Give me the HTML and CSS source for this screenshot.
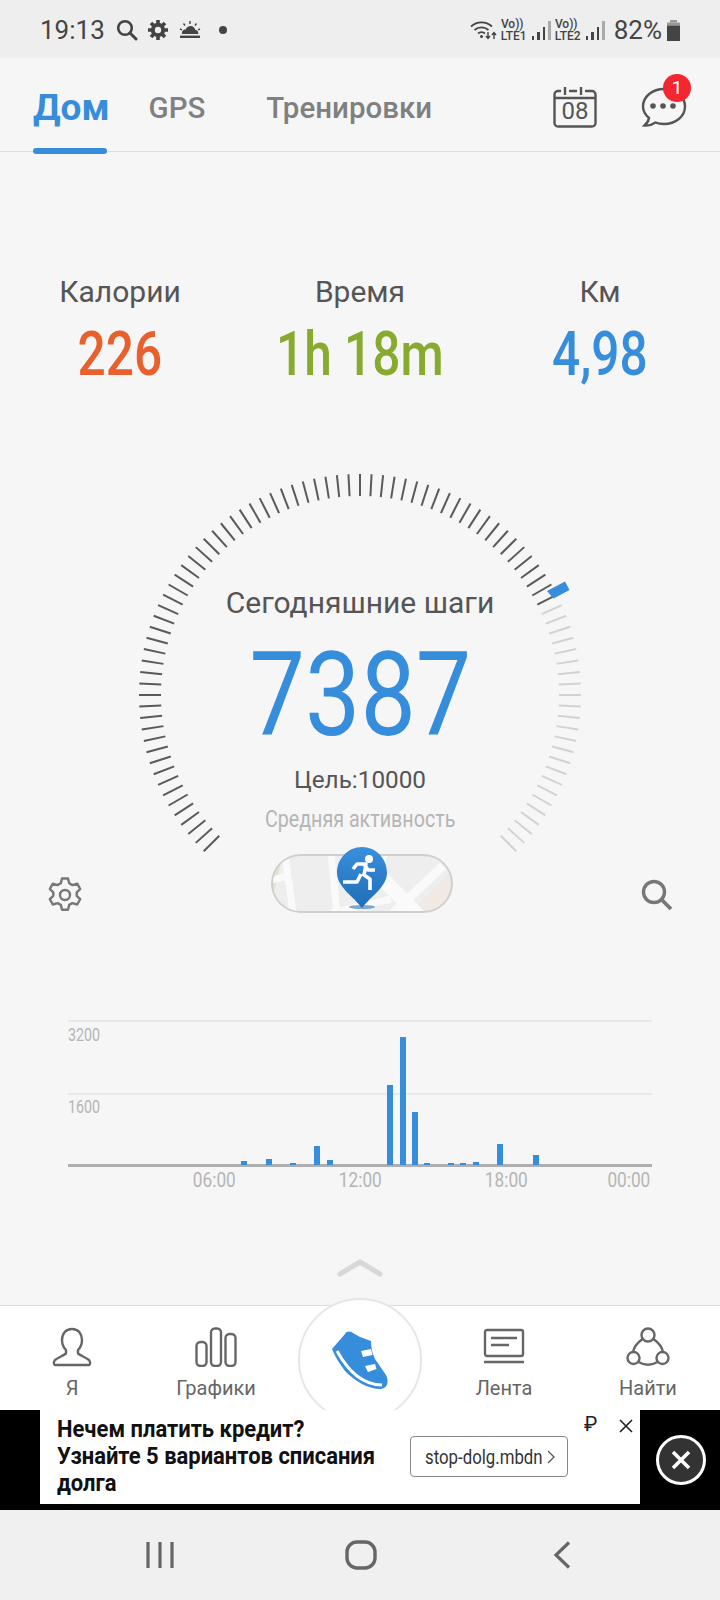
FILE: index.html
```html
<!DOCTYPE html>
<html lang="ru">
<head>
    <meta charset="UTF-8">
    <meta name="viewport" content="width=device-width, initial-scale=1.0">
    <title>Дом</title>
    <link rel="stylesheet" href="styles.css">
</head>
<body>
<div class="phone">

    <!-- system status bar -->
    <div class="statusbar">
        <div class="status-left">
            <span class="clock">19:13</span>
            <svg class="st-search" width="22" height="22" viewBox="0 0 22 22"><circle cx="9" cy="9" r="6.8" fill="none" stroke="#444" stroke-width="2.6"/><path d="M14 14l6 6" stroke="#444" stroke-width="3" stroke-linecap="round"/></svg>
            <svg class="st-gear" width="20" height="20" viewBox="0 0 20 20"><circle cx="10" cy="10" r="5.2" fill="none" stroke="#444" stroke-width="4"/><g stroke="#444" stroke-width="3.6"><path d="M10 0v4M10 16v4M0 10h4M16 10h4M3 3l2.8 2.8M14.2 14.2L17 17M17 3l-2.8 2.8M5.8 14.2L3 17"/></g></svg>
            <svg class="st-weather" width="22" height="18" viewBox="0 0 22 18"><path d="M3 13c-.5-3 1.600-4.600 3.600-4.400C7.600 6.400 9.500 5 11.500 5c2.700 0 4.500 1.800 4.800 3.900 2-.1 3.400 1.700 3 4.100z" fill="#444"/><path d="M1 15.800h20" stroke="#444" stroke-width="2.400"/><path d="M11 0v3M4.500 2.500l1.500 2M17.500 2.500L16 4.500M1 8l2 .8M21 8l-2 .8" stroke="#444" stroke-width="1.400"/></svg>
            <span class="st-dot"></span>
        </div>
        <div class="status-right">
            <svg width="27" height="20" viewBox="0 0 27 20"><g fill="none" stroke="#444" stroke-width="1.800"><path d="M1 6.500C7 1 16 1 22 6.500"/><path d="M4.500 10c4-3.500 10-3.500 14 0"/><path d="M8 13.500c2.200-1.800 4.800-1.800 7 0"/></g><circle cx="11.500" cy="16.500" r="1.500" fill="#444"/><path d="M18 12v6M16 16l2 2.500 2-2.500M24 19v-6M22 15l2-2.500 2 2.500" fill="none" stroke="#444" stroke-width="1.400"/></svg>
            <div class="volte"><span>Vo))</span><span>LTE1</span></div>
            <div class="signal"><i class="s1"></i><i class="s2"></i><i class="s3"></i><i class="s4"></i></div>
            <div class="volte"><span>Vo))</span><span>LTE2</span></div>
            <div class="signal"><i class="s1"></i><i class="s2"></i><i class="s3"></i><i class="s4"></i></div>
            <span class="percent">82%</span>
            <svg width="15" height="21" viewBox="0 0 15 21"><path d="M4 0h7v2.500H4z" fill="#999"/><path d="M1 2.500h13v3H1z" fill="#999"/><path d="M1 5.500h13V21H1z" fill="#444"/></svg>
        </div>
    </div>

    <!-- top tabs -->
    <div class="tabs">
        <a class="tab active">Дом</a>
        <a class="tab tab-gps">GPS</a>
        <a class="tab tab-train">Тренировки</a>
        <div class="tab-icons">
            <div class="calendar">
                <svg width="44" height="42" viewBox="0 0 44 42"><path d="M8 5H5a3.500 3.500 0 0 0-3.500 3.500V37A3.500 3.500 0 0 0 5 40.500h34a3.500 3.500 0 0 0 3.500-3.500V8.500A3.500 3.500 0 0 0 39 5h-7" fill="none" stroke="#555" stroke-width="2.400"/><path d="M1.500 12h41M12 1v8M28 1v8M16 5h8" stroke="#555" stroke-width="2.400"/></svg>
                <span class="cal-day">08</span>
            </div>
            <div class="chat">
                <svg width="46" height="42" viewBox="0 0 46 42"><path d="M23 3c11.500 0 21 7.500 21 17.500S34.500 38 23 38c-3 0-6-.5-8.500-1.500C11.500 38.500 7 40 3.500 39.500c2.500-2 4-4.500 4.500-7.500C4 28.500 2 24.800 2 20.500 2 10.500 11.500 3 23 3z" fill="none" stroke="#555" stroke-width="2.400"/><circle cx="12" cy="20" r="2.800" fill="#555"/><circle cx="22" cy="20" r="2.800" fill="#555"/><circle cx="32" cy="20" r="2.800" fill="#555"/></svg>
                <span class="badge">1</span>
            </div>
        </div>
    </div>

    <div class="main">
        <div class="stats">
            <div class="stat">
                <div class="stat-label">Калории</div>
                <div class="stat-value orange"><span>226</span></div>
            </div>
            <div class="stat">
                <div class="stat-label">Время</div>
                <div class="stat-value green"><span>1h 18m</span></div>
            </div>
            <div class="stat">
                <div class="stat-label">Км</div>
                <div class="stat-value blue"><span>4,98</span></div>
            </div>
        </div>

        <div class="gauge">
            <svg class="gauge-ticks" id="ticks" width="720" height="420" viewBox="0 0 720 420">
                <polygon points="547,127 565,117.500 569.500,126 553.500,134.500" fill="#368ddb"/>
            </svg>
            <div class="gauge-title">Сегодняшние шаги</div>
            <div class="gauge-steps"><span>7387</span></div>
            <div class="gauge-goal">Цель:10000</div>
            <div class="gauge-level"><span>Средняя активность</span></div>
            <div class="gauge-foot">
                <svg class="foot-icon" width="34" height="36" viewBox="0 0 34 36"><path d="M14 1.500h6l1.200 4.800 3.200 1.800 4.800-1.400 3 5.300-3.500 3.400v3.400l3.500 3.400-3 5.300-4.800-1.400-3.200 1.800-1.200 4.800h-6l-1.200-4.800-3.200-1.800-4.800 1.400-3-5.300 3.500-3.400v-3.400L1.800 12l3-5.300 4.800 1.400 3.200-1.800z" fill="none" stroke="#777" stroke-width="2.400" stroke-linejoin="round"/><circle cx="17" cy="18" r="5" fill="none" stroke="#777" stroke-width="2.400"/></svg>
                <div class="map-pill">
                    <svg width="182" height="59" viewBox="0 0 182 59">
                        <rect width="182" height="59" fill="#eeeeee"/>
                        <path d="M0 0h12L0 50z" fill="#dbe6cc"/>
                        <path d="M140 59L182 15v44z" fill="#f1e9e3"/>
                        <path d="M0 26l18-4M14 0l8 59M60 59l60-14M60 0l6 59" stroke="#fafafa" stroke-width="7" fill="none"/>
                        <path d="M76 0h40l-3 16 42 43h-20L96 20z" fill="#fafafa"/>
                        <path d="M122 59L172 12" stroke="#fafafa" stroke-width="9"/>
                        <rect x="1" y="1" width="180" height="57" rx="28.500" fill="none" stroke="#cfcfcf" stroke-width="2"/>
                    </svg>
                    <svg class="pin" width="50" height="62" viewBox="0 0 50 62">
                        <defs><linearGradient id="pinfill" x1="0" y1="0" x2="0" y2="1"><stop offset="0" stop-color="#3a8fdc"/><stop offset="1" stop-color="#1f6db8"/></linearGradient></defs>
                        <ellipse cx="25" cy="60" rx="13" ry="2" fill="#2a6fb0" opacity=".6"/>
                        <path d="M25 0c14 0 25 11.500 25 26 0 14-17 24-25 35C17 50 0 40 0 26 0 11.500 11 0 25 0z" fill="url(#pinfill)"/>
                        <circle cx="32" cy="12" r="4" fill="#fff"/>
                        <path d="M16 22l4-5h9l-2 11 6 4v11M27 17l4 6h7M24 27l-4 8H6" fill="none" stroke="#fff" stroke-width="3.600" stroke-linejoin="round"/>
                    </svg>
                </div>
                <svg class="foot-icon" width="32" height="32" viewBox="0 0 32 32"><circle cx="13" cy="13" r="10.500" fill="none" stroke="#777" stroke-width="3.400"/><path d="M20.500 20.500L30 30" stroke="#777" stroke-width="3.800"/></svg>
            </div>
        </div>

        <div class="chart">
            <div class="plot" id="plot">
                <div class="gridline"></div>
                <div class="y-label y-top"><span>3200</span></div>
                <div class="y-label y-mid"><span>1600</span></div>
            </div>
            <div class="x-labels">
                <span>06:00</span>
                <span>12:00</span>
                <span>18:00</span>
                <span class="x-last">00:00</span>
            </div>
        </div>

        <svg class="handle" width="46" height="18" viewBox="0 0 46 18"><path d="M3 15L23 3l20 12" fill="none" stroke="#d8d8d8" stroke-width="5" stroke-linecap="round" stroke-linejoin="round"/></svg>
    </div>

    <!-- bottom menu -->
    <div class="bottombar">
        <div class="run-circle">
            <svg width="58" height="59" viewBox="0 0 58 59">
                <path d="M1 18L14 3c2-3 5-3 8-1l7 4 11 4c0 6 1 12 4 18l11 16c3 6 2 13-5 14-14 0-26-8-36-18C9 33 4 26 1 18z" fill="#368ddb"/>
                <path d="M6 20c5 9 11 18 20 25 8 6 15 9 25 9" fill="none" stroke="#fff" stroke-width="3"/>
                <path d="M30 20l10-2 1.500 6-9.500 2zM34 35l10-2 1.500 5-8.500 3z" fill="#fff"/>
            </svg>
        </div>
        <div class="menu-item">
            <svg width="40" height="40" viewBox="0 0 40 40"><path d="M20 2c6.500 0 10 5 10 11 0 4-1.500 7.500-4 10v3.500c3 2.500 8 4 11 6.500 1.500 1.500 1.500 4.500 0 5H3c-1.500-.5-1.500-3.500 0-5 3-2.500 8-4 11-6.500V23c-2.500-2.500-4-6-4-10C10 7 13.500 2 20 2z" fill="none" stroke="#666" stroke-width="2.400" stroke-linejoin="round"/></svg>
            <span>Я</span>
        </div>
        <div class="menu-item">
            <svg width="42" height="40" viewBox="0 0 42 40"><g fill="none" stroke="#666" stroke-width="2.400"><rect x="1.500" y="15" width="10" height="24" rx="4"/><rect x="16" y="1.500" width="10" height="37.500" rx="4"/><rect x="30.500" y="7" width="10" height="32" rx="4"/></g></svg>
            <span>Графики</span>
        </div>
        <div class="menu-item"></div>
        <div class="menu-item">
            <svg width="42" height="40" viewBox="0 0 42 40"><rect x="2" y="3" width="38" height="26" rx="2" fill="none" stroke="#666" stroke-width="2.400"/><path d="M8 11h26M8 18h18M1 35h40" stroke="#666" stroke-width="2.400"/></svg>
            <span>Лента</span>
        </div>
        <div class="menu-item">
            <svg width="44" height="40" viewBox="0 0 44 40"><g fill="none" stroke="#666" stroke-width="2.400"><circle cx="22" cy="8" r="6.500"/><circle cx="7.500" cy="31" r="6"/><circle cx="36.500" cy="31" r="6"/><path d="M16.500 12C11 16 8 20 7 25M27.500 12c5.500 4 8.500 8 9.500 13M12.500 35c6 3.500 13 3.500 19 0"/></g></svg>
            <span>Найти</span>
        </div>
    </div>

    <!-- ad banner -->
    <div class="ad">
        <div class="ad-card">
            <div class="ad-text">Нечем платить кредит?<br>Узнайте 5 вариантов списания<br>долга</div>
            <div class="ad-link"><span class="ad-url"><span>stop-dolg.mbdn</span></span><svg width="8" height="14" viewBox="0 0 8 14"><path d="M1 1l6 6-6 6" fill="none" stroke="#555" stroke-width="1.300"/></svg></div>
            <span class="ad-rub">₽</span>
            <svg class="ad-x" width="14" height="14" viewBox="0 0 14 14"><path d="M1 1l12 12M13 1L1 13" stroke="#222" stroke-width="1.600"/></svg>
        </div>
        <div class="ad-close">
            <svg width="20" height="20" viewBox="0 0 20 20"><path d="M2 2l16 16M18 2L2 18" stroke="#fff" stroke-width="3.600"/></svg>
        </div>
    </div>

    <!-- system nav -->
    <div class="sysnav">
        <svg width="28" height="28" viewBox="0 0 28 28"><path d="M2 1v26M14 1v26M26 1v26" stroke="#666" stroke-width="3.200"/></svg>
        <svg width="32" height="30" viewBox="0 0 32 30"><rect x="2" y="2" width="28" height="26" rx="10" fill="none" stroke="#666" stroke-width="3.400"/></svg>
        <svg class="nav-back" width="18" height="28" viewBox="0 0 18 28"><path d="M16 1.500L3 14l13 12.500" fill="none" stroke="#666" stroke-width="3.200"/></svg>
    </div>

</div>
<script src="script.js"></script>
</body>
</html>
```

FILE: styles.css
```css
* { box-sizing: border-box; }

body {
    margin: 0;
    font-family: Roboto, "Noto Sans", sans-serif;
    background-color: #f6f6f6;
}

.phone {
    width: 720px;
    height: 1600px;
    overflow: hidden;
    display: flex;
    flex-direction: column;
}

/* status bar */
.statusbar {
    height: 58px;
    flex: none;
    background-color: #eeeeee;
    color: #444;
    display: flex;
    justify-content: space-between;
    align-items: center;
    padding: 2px 39px 0 40px;
}
.status-left, .status-right { display: flex; align-items: center; }
.clock { font-size: 26px; width: 76px; }
.st-gear { margin-left: 10px; }
.st-weather { margin-left: 11px; }
.st-dot {
    width: 8px;
    height: 8px;
    border-radius: 50%;
    background-color: #444;
    margin-left: 18px;
}
.volte {
    display: flex;
    flex-direction: column;
    align-items: center;
    font-size: 12px;
    font-weight: 500;
    line-height: 12px;
    margin-left: 4px;
    width: 26px;
}
.volte span:first-child { padding-right: 3px; }
.signal {
    display: flex;
    align-items: flex-end;
    gap: 3px;
    height: 20px;
    margin-left: 5px;
}
.signal i { width: 2.5px; background-color: #444; display: block; }
.signal .s1 { height: 4px; }
.signal .s2 { height: 8px; }
.signal .s3 { height: 13px; }
.signal .s4 { height: 19px; background-color: #aaa; }
.percent { font-size: 26px; margin-left: 9px; margin-right: 4px; }

/* tabs */
.tabs {
    height: 94px;
    flex: none;
    border-bottom: 1px solid #dfdfdf;
    display: flex;
    position: relative;
    padding-left: 33px;
}
.tab {
    font-size: 29.5px;
    font-weight: 500;
    color: #808080;
    padding-top: 32px;
    line-height: 36px;
}
.tab-gps { margin-left: 39px; }
.tab-train { margin-left: 61px; }
.tab.active {
    font-size: 37px;
    font-weight: 700;
    color: #368ddb;
    position: relative;
}
.tab.active::after {
    content: "";
    position: absolute;
    left: 0;
    bottom: -3px;
    width: 74px;
    height: 6px;
    border-radius: 3px;
    background-color: #368ddb;
}
.tab-icons {
    margin-left: auto;
    display: flex;
    gap: 44px;
    padding: 28px 33px 0 0;
}
.calendar, .chat { position: relative; height: 42px; }
.cal-day {
    position: absolute;
    left: 0;
    right: 0;
    top: 12px;
    text-align: center;
    font-size: 24px;
    line-height: 26px;
    color: #555;
}
.badge {
    position: absolute;
    left: 22px;
    top: -12px;
    width: 28px;
    height: 28px;
    border-radius: 50%;
    background-color: #f4262f;
    color: #fff;
    text-align: center;
    font-size: 19px;
    line-height: 28px;
}

/* main part */
.main {
    flex: 1;
    position: relative;
    padding-top: 122px;
}
.stats { display: flex; }
.stat { width: 240px; text-align: center; }
.stat-label {
    font-size: 30px;
    line-height: 36px;
    color: #555;
}
.stat-value {
    font-size: 62px;
    font-weight: 500;
    line-height: 70px;
    margin-top: 9px;
}
.stat-value span, .gauge-steps span, .gauge-level span, .y-label span, .x-labels span, .ad-url span {
    display: inline-block;
    transform: scaleX(.8);
}
.orange { color: #e8602c; }
.green { color: #86ab2f; }
.blue { color: #368ddb; }

.gauge {
    position: relative;
    margin-top: 75px;
    text-align: center;
    padding-top: 121px;
}
.gauge-ticks { position: absolute; left: 0; top: 0; }
.gauge-title {
    font-size: 30px;
    line-height: 36px;
    color: #555;
}
.gauge-steps {
    font-size: 116px;
    line-height: 124px;
    color: #368ddb;
    margin-top: 12px;
}
.gauge-steps span { transform: scaleX(.85); }
.gauge-goal {
    font-size: 24.3px;
    line-height: 30px;
    color: #555;
    margin-top: 8px;
}
.gauge-level {
    font-size: 24px;
    line-height: 28px;
    color: #b5b5b5;
    margin-top: 10px;
}
.gauge-level span { transform: scaleX(.82); }
.gauge-foot {
    display: flex;
    justify-content: space-between;
    align-items: center;
    padding: 0 47px 0 48px;
    margin-top: 21px;
}
.foot-icon { margin-top: 23px; }
.map-pill {
    position: relative;
    width: 182px;
    height: 59px;
    border-radius: 30px;
}
.map-pill > svg:first-child { border-radius: 30px; display: block; }
.pin { position: absolute; left: 66px; top: -7px; }

/* steps chart */
.chart { margin: 107px 68px 0; width: 584px; }
.plot {
    position: relative;
    height: 147px;
    border-top: 2px solid #e8e8e8;
    border-bottom: 3px solid #aeaeae;
    display: grid;
    grid-template-columns: repeat(48, 1fr);
    align-items: end;
}
.gridline {
    position: absolute;
    left: 0;
    right: 0;
    top: 71px;
    height: 2px;
    background-color: #e8e8e8;
}
.bar {
    width: 6px;
    justify-self: center;
    grid-row: 1;
    background-color: #368ddb;
    position: relative;
    margin-bottom: -1px;
}
.y-label {
    position: absolute;
    left: 0;
    font-size: 19px;
    line-height: 20px;
    color: #b5b5b5;
}
.y-label span { transform-origin: left center; transform: scaleX(.75); }
.y-top { top: 3px; }
.y-mid { top: 75px; }
.x-labels {
    display: grid;
    grid-template-columns: repeat(4, 146px);
    margin-top: -1px;
    font-size: 21px;
    line-height: 28px;
    color: #b5b5b5;
}
.x-labels span {
    justify-self: end;
    transform-origin: center;
    transform: translateX(50%) scaleX(.82);
}
.x-labels .x-last {
    transform-origin: right center;
    transform: translateX(-2px) scaleX(.82);
}

.handle { position: absolute; left: 337px; bottom: 28px; }

/* bottom menu */
.bottombar {
    height: 105px;
    flex: none;
    background-color: #fff;
    border-top: 1px solid #dedede;
    display: grid;
    grid-template-columns: repeat(5, 1fr);
    position: relative;
    padding: 21px 0 0;
}
.menu-item {
    display: flex;
    flex-direction: column;
    align-items: center;
    font-size: 20px;
    line-height: 24px;
    color: #666;
    gap: 9px;
}
.run-circle {
    position: absolute;
    left: 298px;
    top: -8px;
    width: 124px;
    height: 124px;
    border-radius: 50%;
    background-color: #fff;
    border: 2px solid #e6e6e6;
    display: flex;
    align-items: center;
    justify-content: center;
}

/* ad */
.ad {
    height: 100px;
    flex: none;
    background-color: #000;
    position: relative;
    z-index: 1;
    padding-left: 40px;
}
.ad-card {
    width: 600px;
    height: 94px;
    background-color: #fff;
    position: relative;
    padding: 6px 0 0 17px;
}
.ad-text {
    font-size: 24px;
    font-weight: 700;
    line-height: 27px;
    color: #111;
    width: 400px;
    white-space: nowrap;
    transform-origin: left top;
    transform: scaleX(.915);
}
.ad-link {
    position: absolute;
    left: 370px;
    top: 26px;
    width: 158px;
    height: 41px;
    border: 1px solid #888;
    border-radius: 4px;
    display: flex;
    align-items: center;
    padding-left: 14px;
    gap: 9px;
}
.ad-url {
    width: 113px;
    white-space: nowrap;
    font-size: 20px;
    color: #333;
}
.ad-url span { transform-origin: left center; transform: scaleX(.84); }
.ad-rub { position: absolute; left: 544px; top: 2px; font-size: 20px; line-height: 24px; color: #222; }
.ad-x { position: absolute; left: 579px; top: 9px; }
.ad-close {
    position: absolute;
    left: 656px;
    top: 25px;
    width: 50px;
    height: 50px;
    border-radius: 50%;
    background-color: #333;
    border: 3px solid #fff;
    display: flex;
    align-items: center;
    justify-content: center;
}

/* system nav */
.sysnav {
    height: 90px;
    flex: none;
    background-color: #f0f0f0;
    display: flex;
    align-items: center;
    position: relative;
    padding: 0 0 0 146px;
    gap: 171px;
}
.nav-back { margin-left: 5px; }
```

FILE: script.js
```js
// gauge ticks, 3 degrees apart, centre of the dial at 360,231
var svg = document.getElementById("ticks");
var NS = "http://www.w3.org/2000/svg";
var marker = svg.firstElementChild;
for (var a = -135; a <= 135; a += 3) {
    var r = a * Math.PI / 180;
    var line = document.createElementNS(NS, "line");
    line.setAttribute("x1", 360 + 199 * Math.sin(r));
    line.setAttribute("y1", 231 - 199 * Math.cos(r));
    line.setAttribute("x2", 360 + 221 * Math.sin(r));
    line.setAttribute("y2", 231 - 221 * Math.cos(r));
    line.setAttribute("stroke", a <= 63 ? "#5a5a5a" : "#d2d2d2");
    line.setAttribute("stroke-width", "2");
    svg.insertBefore(line, marker);
}

// half hour columns of the day
var data = { 14: 4, 16: 6, 18: 2, 20: 19, 21: 5, 26: 80, 27: 128, 28: 53, 29: 2, 31: 2, 32: 2, 33: 3, 35: 21, 38: 10 };
var plot = document.getElementById("plot");
for (var col in data) {
    var bar = document.createElement("div");
    bar.className = "bar";
    bar.style.gridColumn = (Number(col) + 1);
    bar.style.height = data[col] + "px";
    plot.appendChild(bar);
}
```
